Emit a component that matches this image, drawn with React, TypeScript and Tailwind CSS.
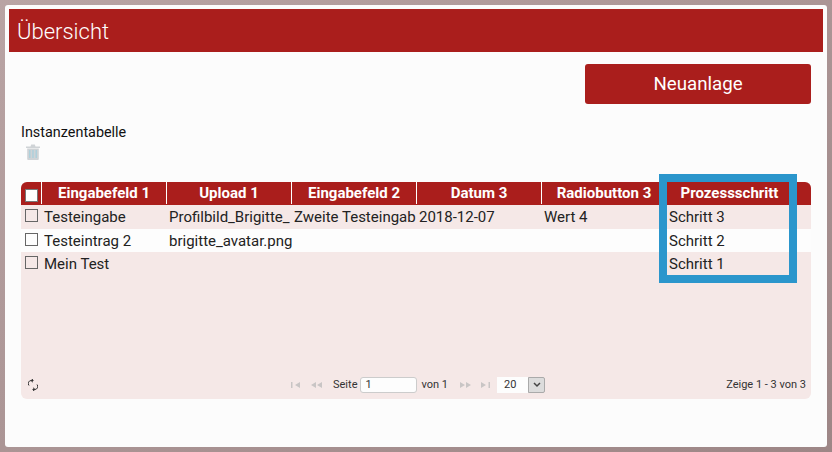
import { useState } from "react";

const columns = ["Eingabefeld 1", "Upload 1", "Eingabefeld 2", "Datum 3", "Radiobutton 3", "Prozessschritt"];

const rows = [
  { cells: ["Testeingabe", "Profilbild_Brigitte_", "Zweite Testeingab", "2018-12-07", "Wert 4", "Schritt 3"], bg: "bg-[#f5e8e7]", h: "h-6" },
  { cells: ["Testeintrag 2", "brigitte_avatar.png", "", "", "", "Schritt 2"], bg: "bg-[#fdfdfd]", h: "h-[23px]" },
  { cells: ["Mein Test", "", "", "", "", "Schritt 1"], bg: "bg-[#f5e8e7]", h: "h-[23px]" },
];

function TrashIcon() {
  return (
    <svg width="14" height="16" viewBox="0 0 14 16" className="text-[#cfd3d6]">
      <path d="M0 2.5h14v1.6H0z M4.5 2.5 5.2.5h3.6l.7 2z" fill="currentColor" />
      <path d="M1.2 4.5h11.6V15a1 1 0 0 1-1 1H2.2a1 1 0 0 1-1-1z" fill="currentColor" />
      <path d="M3.8 6v8M7 6v8M10.2 6v8" stroke="#a9cfdc" strokeWidth="1.3" />
    </svg>
  );
}

function RefreshIcon() {
  return (
    <svg width="10" height="12" viewBox="0 0 10 12" fill="none" stroke="#333" strokeWidth="1">
      <path d="M5.5 1.5H3.5A3 3 0 0 0 1 6.5M4.5 10.5h2A3 3 0 0 0 9 5.5" />
      <path d="M5 0 3 1.6 5 3.2M5 8.8 7 10.4 5 12" />
    </svg>
  );
}

function PagerIcon({ kind }: { kind: "first" | "prev" | "next" | "last" }) {
  const d = {
    first: "M0 1h1.5v6H0z M9 1v6L4 4z",
    prev: "M6 1v6L1 4z M12 1v6L7 4z",
    next: "M0 1v6l5-3z M6 1v6l5-3z",
    last: "M0 1v6l5-3z M7.5 1H9v6H7.5z",
  }[kind];
  const wide = kind === "prev" || kind === "next";
  return (
    <svg width={wide ? 12 : 10} height="8" viewBox={wide ? "0 0 12 8" : "0 0 10 8"} className="text-[#c9c5c5]">
      <path d={d} fill="currentColor" />
    </svg>
  );
}

export default function App() {
  const [page, setPage] = useState("1");

  return (
    <div className="w-[832px] h-[452px] bg-gradient-to-br from-[#b9a4a4] to-[#9d8686] p-[5px] font-['Roboto',sans-serif] overflow-hidden">
      <div className="relative w-[822px] h-[442px] rounded-[3px] bg-[#fcfcfc] p-1">
        {/* Title bar */}
        <div className="h-[43px] w-[814px] bg-[#aa1e1c] pl-2 pt-px flex items-center">
          <h1 className="text-[22px] font-light text-white">Übersicht</h1>
        </div>

        <div className="px-3">
          <div className="flex justify-end mt-3">
            <button className="w-[226px] h-10 rounded-[3px] bg-[#aa1e1c] text-white text-[18.7px]">Neuanlage</button>
          </div>

          <p className="mt-[21px] text-[14.4px] leading-4 text-[#111]">Instanzentabelle</p>
          <div className="pl-[5px] mt-[3px] h-4">
            <TrashIcon />
          </div>

          {/* Table */}
          <div className="relative mt-[22px] w-[790px] h-[217px] rounded-md bg-[#f5e8e7] overflow-hidden flex flex-col">
            <div className="h-[23px] bg-[#aa1e1c] flex pb-px">
              <div className="w-[21px] flex items-end justify-center border-r border-white">
                <span className="block w-[13px] h-[13px] mb-0.5 ml-px bg-white border border-[#777]" />
              </div>
              {columns.map((col, i) => (
                <div
                  key={col}
                  className={`w-[125px] text-center text-[15px] leading-[22px] font-bold text-white truncate ${i < 5 ? "border-r border-white" : ""}`}
                >
                  {col}
                </div>
              ))}
            </div>

            {rows.map((row) => (
              <div key={row.cells[0]} className={`flex text-[#222] text-[15px] ${row.bg} ${row.h}`}>
                <div className="w-[21px] pl-1 pt-1">
                  <span className="block w-[13px] h-[13px] border border-[#666]" />
                </div>
                {row.cells.map((cell, i) => (
                  <div key={i} className="w-[125px] pl-[2px] leading-6 whitespace-nowrap overflow-hidden">
                    {cell}
                  </div>
                ))}
              </div>
            ))}

            {/* Pager */}
            <div className="mt-auto h-6 mb-[2px] pl-[7px] pr-[5px] flex items-center text-[11px] text-[#333]">
              <div className="w-[263px]">
                <RefreshIcon />
              </div>
              <div className="flex items-center">
                <PagerIcon kind="first" />
                <span className="w-[9px]" />
                <PagerIcon kind="prev" />
                <span className="ml-[11px]">Seite</span>
                <input
                  value={page}
                  onChange={(e) => setPage(e.target.value)}
                  className="ml-[3px] w-[57px] h-4 rounded-[3px] border border-[#ccc] bg-[#fdfdfd] px-1 text-[11px] outline-none"
                />
                <span className="ml-1">von 1</span>
                <span className="ml-3 flex"><PagerIcon kind="next" /></span>
                <span className="ml-[9px] flex"><PagerIcon kind="last" /></span>
                <div className="ml-[6px] w-[31px] h-4 bg-[#fdfdfd] flex items-center pl-[7px]">20</div>
                <div className="w-[17px] h-4 bg-[#dcdcdc] border border-[#aaa] rounded-r-[2px] flex items-center justify-center">
                  <svg width="8" height="6" viewBox="0 0 8 6">
                    <path d="M1 1l3 3 3-3" fill="none" stroke="#444" strokeWidth="1.5" />
                  </svg>
                </div>
              </div>
              <span className="ml-auto">Zeige 1 - 3 von 3</span>
            </div>
          </div>
        </div>

        {/* Highlight box */}
        <div className="absolute left-[654px] top-[169px] w-[138px] h-[109px] border-8 border-[#2b96cc] pointer-events-none" />
      </div>
    </div>
  );
}
